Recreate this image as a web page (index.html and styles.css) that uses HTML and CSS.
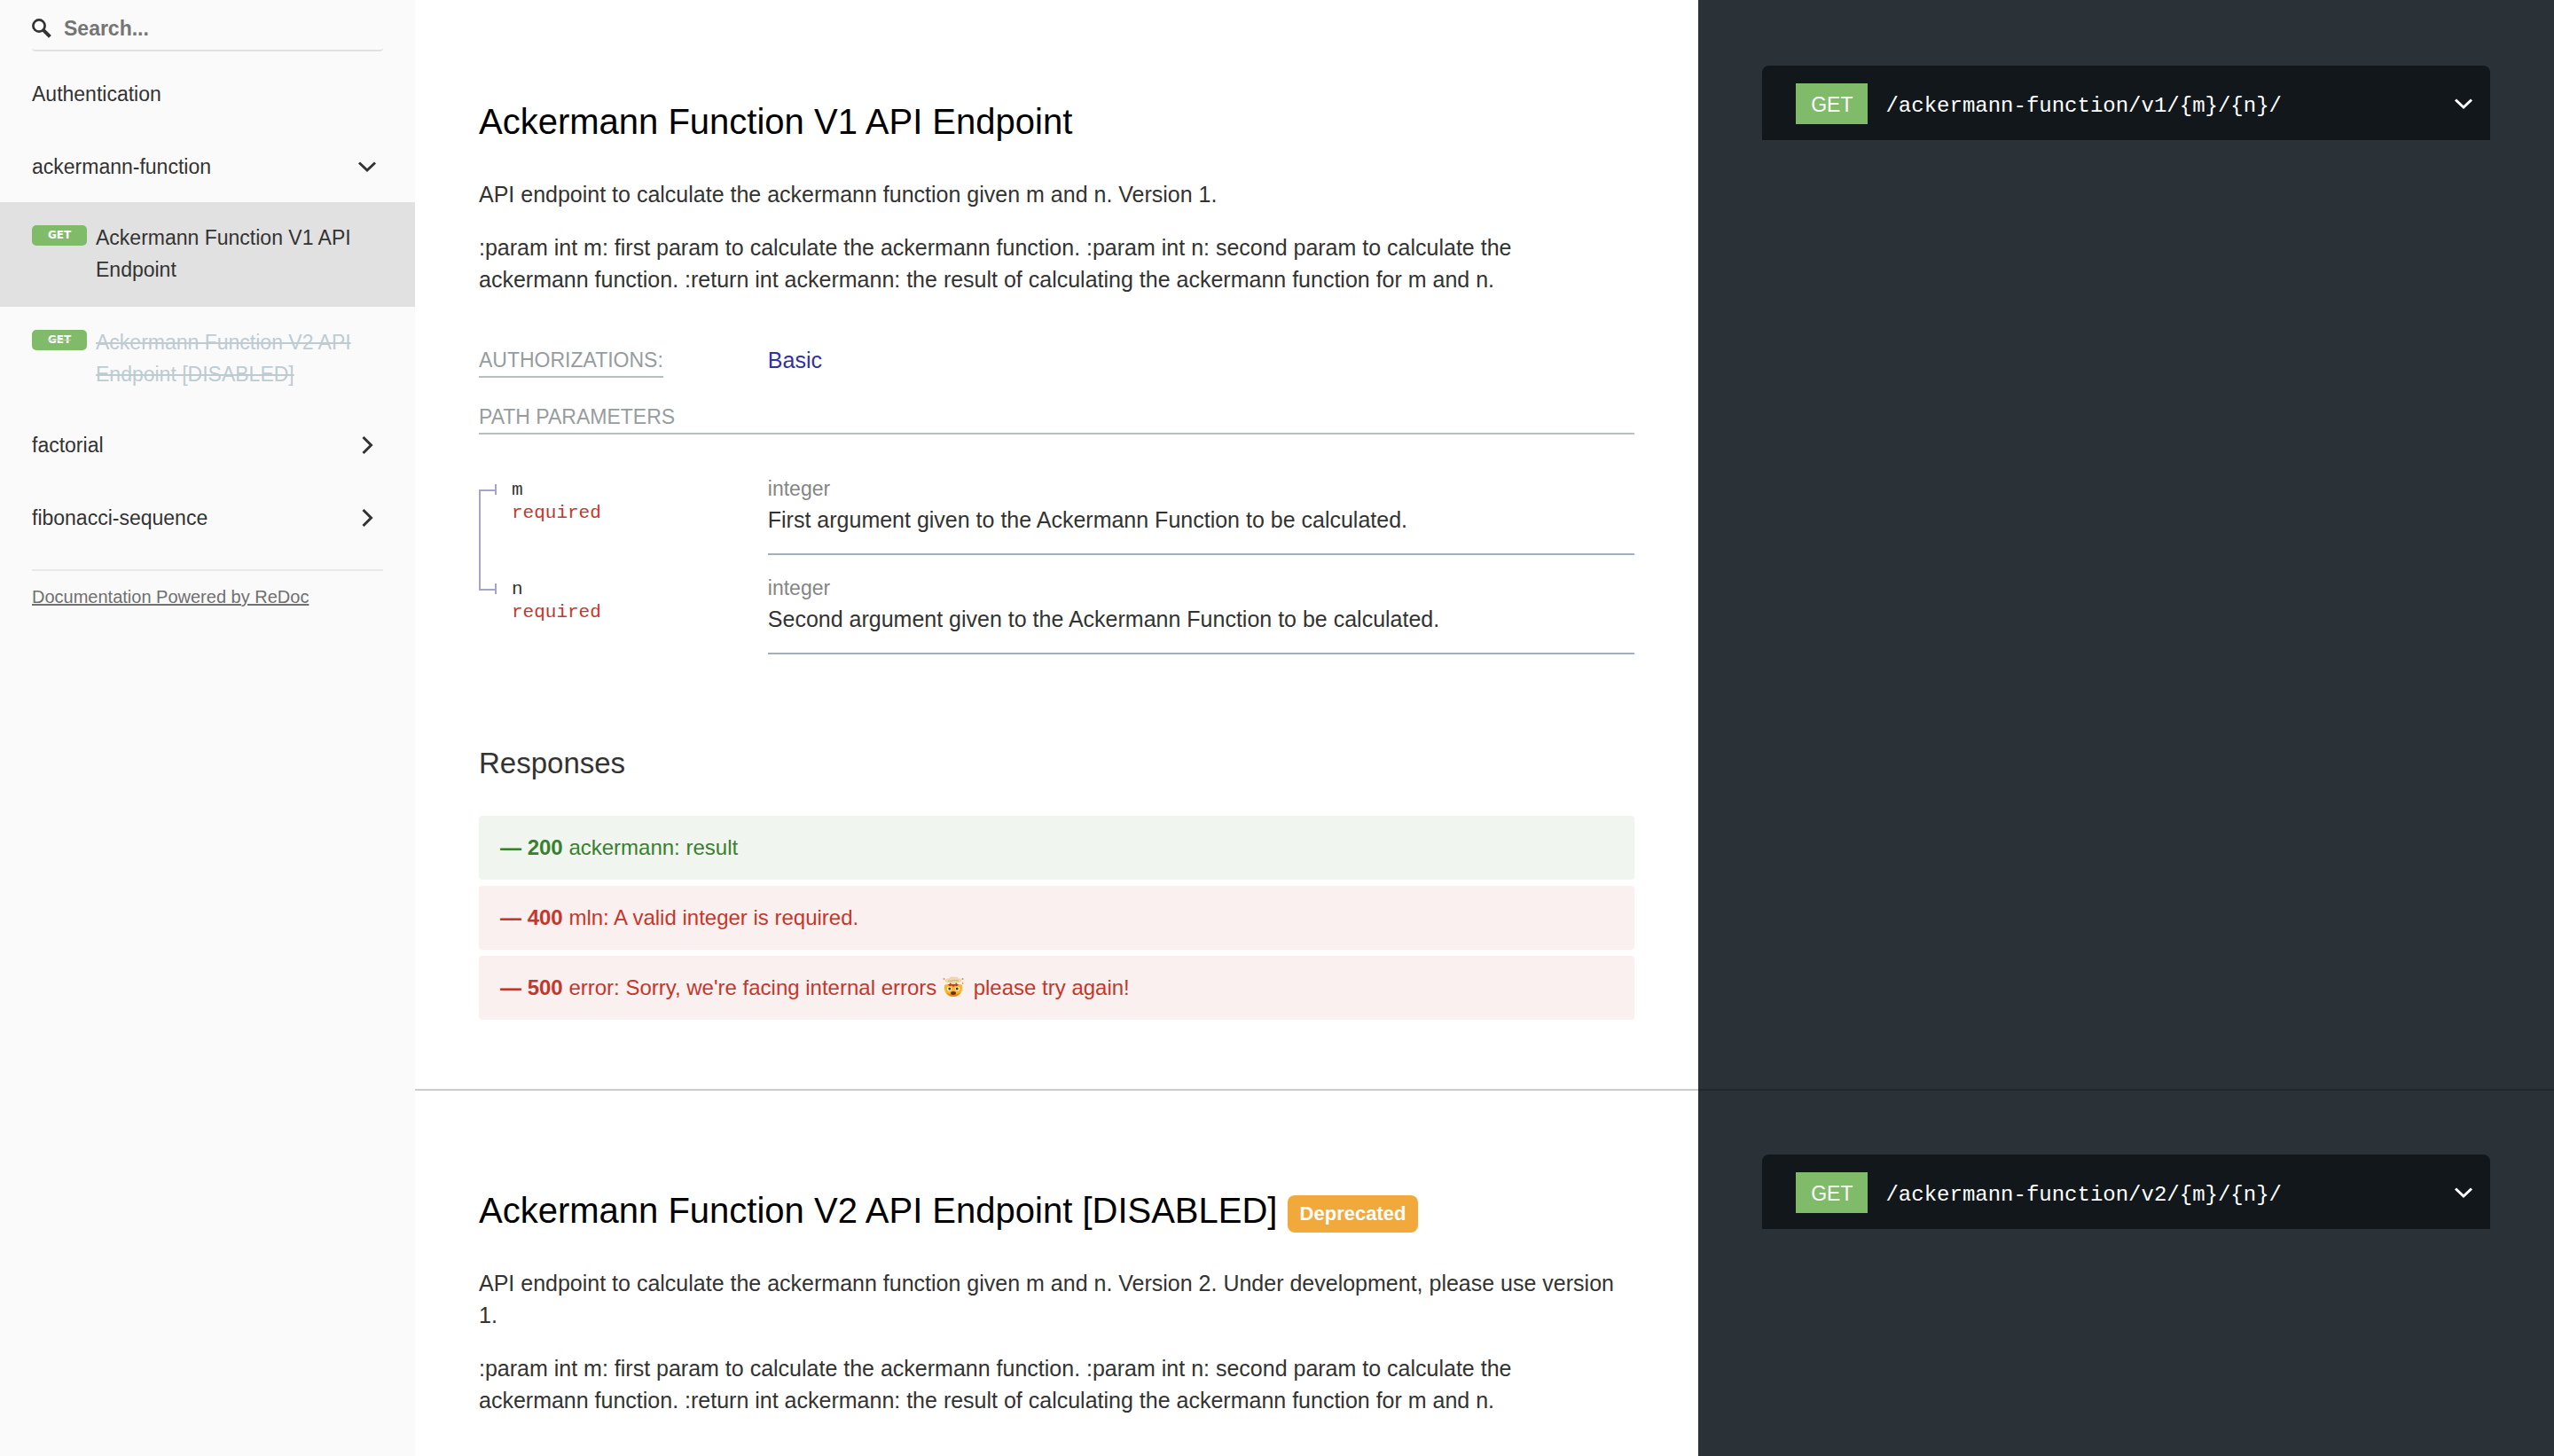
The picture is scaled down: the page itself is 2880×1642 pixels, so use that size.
FILE: index.html
```html
<!DOCTYPE html>
<html lang="en">
<head>
<meta charset="utf-8">
<title>API documentation</title>
<link rel="stylesheet" href="styles.css">
</head>
<body>
<div class="layout">
  <aside class="sidebar">
    <label class="search">
      <svg class="search-icon" viewBox="0 0 22 22" role="img" aria-label="Search"><circle cx="8" cy="8" r="6.6" fill="none" stroke="#333" stroke-width="2.7"/><path d="M12.6 12.6 20.4 20.4" stroke="#333" stroke-width="4"/></svg>
      <input class="search-input" type="text" placeholder="Search...">
    </label>
    <nav>
      <ul class="menu">
        <li><a class="menu-item" href="#authentication">Authentication</a></li>
        <li>
          <a class="menu-item" href="#ackermann">ackermann-function
            <svg class="chevron" viewBox="0 0 24 24" aria-hidden="true"><path d="M3 7.5 12 16 21 7.5"/></svg></a>
          <ul class="submenu">
            <li><a class="operation active" href="#v1"><span class="badge">GET</span><span>Ackermann Function V1 API Endpoint</span></a></li>
            <li><a class="operation deprecated" href="#v2"><span class="badge">GET</span><span class="operation-name">Ackermann Function V2 API Endpoint [DISABLED]</span></a></li>
          </ul>
        </li>
        <li><a class="menu-item" href="#factorial">factorial
          <svg class="chevron" viewBox="0 0 24 24" aria-hidden="true"><path d="M7.5 3 16.5 12 7.5 21"/></svg></a></li>
        <li><a class="menu-item" href="#fibonacci">fibonacci-sequence
          <svg class="chevron" viewBox="0 0 24 24" aria-hidden="true"><path d="M7.5 3 16.5 12 7.5 21"/></svg></a></li>
      </ul>
    </nav>
    <div class="powered"><a href="#redoc">Documentation Powered by ReDoc</a></div>
  </aside>

  <main class="content">
    <section class="endpoint" id="v1">
      <div class="docs">
        <h1 class="title">Ackermann Function V1 API Endpoint</h1>
        <p>API endpoint to calculate the ackermann function given m and n. Version 1.</p>
        <p>:param int m: first param to calculate the ackermann function. :param int n: second param to calculate the<br>ackermann function. :return int ackermann: the result of calculating the ackermann function for m and n.</p>
        <div class="auth">
          <div><h2 class="caption">Authorizations:</h2></div>
          <a class="auth-link" href="#basic">Basic</a>
        </div>
        <h2 class="caption">Path Parameters</h2>
        <table class="params">
          <tr>
            <td class="param-name"><span class="tick"></span><div>m</div><div class="required">required</div></td>
            <td><div class="param-info"><div class="type">integer</div><div>First argument given to the Ackermann Function to be calculated.</div></div></td>
          </tr>
          <tr>
            <td class="param-name"><span class="tick"></span><div>n</div><div class="required">required</div></td>
            <td><div class="param-info"><div class="type">integer</div><div>Second argument given to the Ackermann Function to be calculated.</div></div></td>
          </tr>
        </table>
        <h2 class="subtitle">Responses</h2>
        <div class="responses">
          <button class="response ok" type="button"><strong>— 200</strong> ackermann: result</button>
          <button class="response error" type="button"><strong>— 400</strong> mln: A valid integer is required.</button>
          <button class="response error" type="button"><strong>— 500</strong> error: Sorry, we're facing internal errors
            <svg class="emoji" viewBox="0 0 24 24" role="img" aria-label="exploding head">
              <path d="M2 10C1 18 5 23 12 23s11-5 10-13c-3-2-17-2-20 0z" fill="#f9b62b"/>
              <path d="M4 18c2 4 5 5 8 5s6-1 8-5c-3 3-13 3-16 0z" fill="#e88a1c"/>
              <path d="M6 9.5 8 8.5 9 6h6l1 2.5 2 1-2 2-2-1-2 1.5-2-1.5-2 1z" fill="#b5432b"/>
              <path d="M3 6c-1-3 2-4 4-3.500C8 .5 11 0 12.5 1c2-1 5 0 5.5 1.500 3-.5 4 2 2.500 4-2 1.500-4 .5-5 .5L14 9h-4L8.500 7C6 7.500 4 7.500 3 6z" fill="#eed9ae"/>
              <path d="M6 5.5c2-1 3 .5 5-.5s4 0 7 0" fill="none" stroke="#c9a878"/>
              <circle cx="7.5" cy="14" r="2.6" fill="#fff3cf"/><circle cx="16.5" cy="14" r="2.6" fill="#fff3cf"/>
              <circle cx="7.8" cy="14" r="1.5" fill="#5c3214"/><circle cx="16.2" cy="14" r="1.5" fill="#5c3214"/>
              <ellipse cx="12" cy="19" rx="3" ry="1.9" fill="#693017"/>
              <circle cx="1.5" cy="3" r="1" fill="#e58b32"/><circle cx="22.5" cy="3" r="1" fill="#e58b32"/><circle cx="22.5" cy="8" r=".8" fill="#d56a34"/>
            </svg> please try again!</button>
        </div>
      </div>
      <div class="samples">
        <button class="request" type="button"><span class="verb">GET</span><code class="path">/ackermann-function/v1/{m}/{n}/</code>
          <svg class="chevron light" viewBox="0 0 24 24" aria-hidden="true"><path d="M3 7.5 12 16 21 7.5"/></svg></button>
      </div>
    </section>
    <section class="endpoint" id="v2">
      <div class="docs">
        <h1 class="title">Ackermann Function V2 API Endpoint [DISABLED] <span class="flag">Deprecated</span></h1>
        <p>API endpoint to calculate the ackermann function given m and n. Version 2. Under development, please use version 1.</p>
        <p>:param int m: first param to calculate the ackermann function. :param int n: second param to calculate the<br>ackermann function. :return int ackermann: the result of calculating the ackermann function for m and n.</p>
      </div>
      <div class="samples">
        <button class="request" type="button"><span class="verb">GET</span><code class="path">/ackermann-function/v2/{m}/{n}/</code>
          <svg class="chevron light" viewBox="0 0 24 24" aria-hidden="true"><path d="M3 7.5 12 16 21 7.5"/></svg></button>
      </div>
    </section>
  </main>
</div>
</body>
</html>
```
FILE: styles.css
```css
*, *::before, *::after { box-sizing: border-box; }

body {
  margin: 0;
  background: #fff;
  color: #333;
  font: 25px/36px "Liberation Sans", Arial, sans-serif;
}

h1, h2, p, ul { margin: 0; padding: 0; font-weight: 400; }
ul { list-style: none; }
a { color: inherit; text-decoration: none; }
button { border: 0; font: inherit; text-align: left; cursor: pointer; }

.layout {
  display: grid;
  grid-template-columns: 468px minmax(0, 1fr);
  height: 100vh;
  overflow: hidden;
}

/* Sidebar */
.sidebar { background: #fafafa; font-size: 23px; }

.search {
  display: flex;
  align-items: center;
  gap: 14px;
  height: 58px;
  margin: 0 36px 6px;
  padding-top: 8px;
  border-bottom: 2px solid #e1e1e1;
  border-radius: 4px;
}
.search-icon { width: 22px; height: 22px; }
.search-input {
  flex: 1;
  min-width: 0;
  padding: 0;
  border: 0;
  outline: 0;
  background: none;
  color: #333;
  font: bold 23px/36px "Liberation Sans", Arial, sans-serif;
}
.search-input::placeholder { color: #757575; opacity: 1; }

.menu-item {
  display: flex;
  align-items: center;
  justify-content: space-between;
  padding: 24px 42px 22px 36px;
}
.chevron {
  flex: none;
  width: 24px;
  height: 24px;
  fill: none;
  stroke: #333;
  stroke-width: 3;
}
.chevron.light { stroke: #fff; }

.submenu { margin-bottom: -4px; }
.operation {
  display: flex;
  align-items: flex-start;
  gap: 10px;
  padding: 22px 36px 24px;
}
.operation.active { background: #e1e1e1; }
.operation.deprecated { color: #bdccd3; }
.operation-name, .deprecated .badge { text-decoration: line-through #bdccd3; }
.badge {
  flex: none;
  width: 62px;
  margin-top: 4px;
  border-radius: 5px;
  background: #80bb69;
  color: #fff;
  font: bold 12px/23px "DejaVu Sans", sans-serif;
  text-align: center;
}

.powered {
  margin: 18px 36px 0;
  padding-top: 11px;
  border-top: 2px solid #e8e8e8;
  color: #707070;
  font-size: 20px;
}
.powered a { text-decoration: underline; }

/* Endpoints */
.endpoint {
  display: grid;
  grid-template-columns: 3fr 2fr;
  position: relative;
}
.endpoint:not(:last-child)::after {
  content: "";
  position: absolute;
  z-index: 1;
  left: 0;
  right: 0;
  bottom: -2px;
  border-bottom: 2px solid rgba(0, 0, 0, 0.2);
}
.endpoint:last-child { min-height: 100vh; }
.docs { padding: 112px 72px 78px; }
.samples { padding: 74px 72px; background: #2a3238; }

.title {
  margin-bottom: 39px;
  color: #000;
  font-size: 40px;
  line-height: 50px;
}
.flag {
  display: inline-block;
  padding: 0 14px;
  border-radius: 8px;
  background: #f2a93c;
  color: #fff;
  font-size: 22px;
  font-weight: 700;
  line-height: 42px;
  vertical-align: 3px;
}
.docs p { margin-bottom: 24px; }

.auth {
  display: grid;
  grid-template-columns: 1fr 3fr;
  margin: 55px 0 26px;
}
.auth-link { color: #32329f; }
.caption {
  border-bottom: 2px solid #babfc2;
  color: #979c9f;
  font-size: 23px;
  text-transform: uppercase;
}
.auth .caption { display: inline-block; vertical-align: top; }

.params {
  width: 100%;
  margin-top: 44px;
  border-collapse: collapse;
  table-layout: fixed;
}
.params td { padding: 0; vertical-align: top; }
.param-name {
  position: relative;
  width: 25%;
  font: 21px/26px "Liberation Mono", "Courier New", monospace;
}
.params .param-name { padding: 6px 0 0 37px; }
.required { color: #c4372b; }
.param-name::before {
  content: "";
  position: absolute;
  top: 18px;
  left: 0;
  width: 20px;
  height: 114px;
  border: solid #a5a5ca;
  border-width: 2px 0 2px 2px;
}
tr:last-child .param-name::before { display: none; }
.tick {
  position: absolute;
  top: 12px;
  left: 18px;
  width: 2px;
  height: 12px;
  background: #a5a5ca;
}
.param-info {
  height: 92px;
  margin-bottom: 20px;
  border-bottom: 2px solid #a1b0be;
}
.type { color: #858585; font-size: 23px; line-height: 34px; }

.subtitle {
  margin: 81px 0 37px;
  font-size: 33px;
  line-height: 44px;
}
.responses { display: grid; gap: 7px; font-size: 24px; }
.response { padding: 18px 24px; border-radius: 4px; }
.response.ok { background: #f0f5f0; color: #38802d; }
.response.error { background: #faf0f0; color: #c4372b; }
.emoji { width: 24px; height: 24px; margin-right: 4px; vertical-align: -3px; }

.request {
  display: flex;
  align-items: center;
  width: 100%;
  height: 84px;
  padding: 2px 18px 0 38px;
  border-radius: 8px 8px 0 0;
  background: #11171a;
  color: #fff;
}
.verb {
  padding: 6px 17px 4px;
  background: #80bb69;
  font-size: 23px;
}
.path {
  flex: 1;
  margin-left: 20px;
  padding-top: 6px;
  font: 24px/36px "Liberation Mono", "Courier New", monospace;
}
```
